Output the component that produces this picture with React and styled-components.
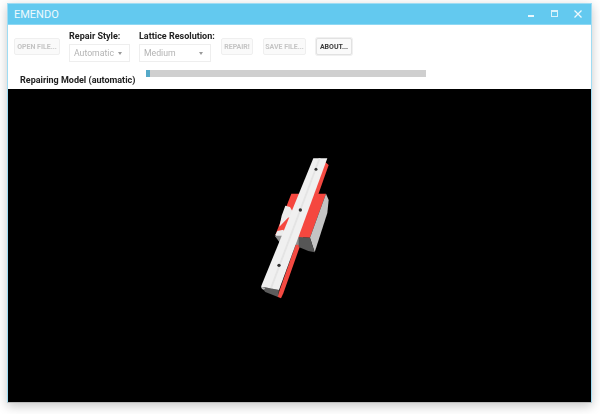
import React from "react";
import styled, { createGlobalStyle } from "styled-components";

const Global = createGlobalStyle`
  html, body { margin: 0; padding: 0; background: #fff; }
  body { width: 600px; height: 414px; overflow: hidden; font-family: Roboto, "Open Sans", sans-serif; }
`;
const Page = styled.div`
  width: 600px; height: 414px; box-sizing: border-box; padding: 3px 8px 12px 7px; display: flex;
`;
const Win = styled.div`
  width: 585px; height: 400px; display: flex; flex-direction: column; background: #fff;
  border: 1px solid #9fdcf3; border-bottom-color: #bbb; box-sizing: border-box;
  box-shadow: 0 3px 10px rgba(0,0,0,.22); filter: blur(.3px);
`;
const TitleBar = styled.div`
  flex: 0 0 20px; background: #63c9ef; display: flex; align-items: center; justify-content: space-between;
  padding: 0 8px 0 6px; color: #eef9fd; font-size: 11px; border-bottom: 1px solid #8fd8f3;
`;
const TitleControls = styled.div`display: flex; align-items: center; gap: 13px;`;
const Toolbar = styled.div`
  display: flex; align-items: flex-start; gap: 10px; padding: 9px 0 0 6px; height: 32px;
`;
const ActionButton = styled.button`
  margin-top: 4px; height: 17px; width: ${p => p.$w}px; padding: 0; box-sizing: border-box; background: #fafafa;
  border: 1px solid ${p => p.$on ? "#e2e2e2" : "#efefef"}; border-radius: 2px;
  color: ${p => p.$on ? "#3a3a3a" : "#c4c4c4"}; font-family: inherit; font-weight: 700; font-size: 7px;
  box-shadow: ${p => p.$on ? "0 0 0 1px #f0f0f0" : "none"};
`;
const Field = styled.div`display: flex; flex-direction: column; width: ${p => p.$w}px; margin-left: -1px; margin-top: -3px;`;
const FieldLabel = styled.div`font-size: 9px; font-weight: 700; color: #222; line-height: 11px; margin-bottom: 2px; white-space: nowrap;`;
const Select = styled.div`
  height: 18px; box-sizing: border-box; border: 1px solid #eee; display: flex; align-items: center;
  justify-content: space-between; padding: 0 7px 0 4px; color: #b3b3b3; font-size: 8.7px;
`;
const Caret = styled.span`width: 0; height: 0; border: 2.5px solid transparent; border-top: 3px solid #999; margin-top: 3px;`;
const ProgressRow = styled.div`display: flex; height: 23px; padding-left: 12px; align-items: flex-start; gap: 11px;`;
const Status = styled.div`font-size: 9px; font-weight: 700; color: #222; margin-top: 8px; line-height: 12px; white-space: nowrap; width: 115px;`;
const Track = styled.div`width: 280px; height: 7px; margin-top: 4px; background: #cfcfcf; display: flex;`;
const Fill = styled.div`width: 4px; background: #55a9c8;`;
const Viewport = styled.div`flex: 1; background: #000; min-height: 0;`;
const Scene = styled.svg`display: block; width: 100%; height: 100%;`;

const Model = () => (
  <Scene viewBox="8 89 583 313">
    <g transform="translate(240 145) scale(.33333)">
      <polygon points="255,50 266,60 130,445 123,460 112,455" fill="#f44a42" />
      <polygon points="154,146 258,146 210,278 122,275 106,270" fill="#f5473f" />
      <polygon points="136,182 150,186 165,212 144,218 118,245 125,212" fill="#ececec" />
      <polygon points="106,270 112,258 130,254 138,272 122,296" fill="#ececec" />
      <polygon points="258,146 266,165 262,204 224,322 210,278" fill="#c4c4c4" />
      <polygon points="104,272 175,272 180,300 122,296" fill="#8d8d8d" />
      <polygon points="176,276 210,278 224,322 205,318 176,306" fill="#565656" />
      <polygon points="63,425 117,435 114,456 76,441" fill="#5c5c5c" />
      <polygon points="220,40 262,40 117,435 63,425" fill="#f0f0f0" />
      <polygon points="236,40 242,40 96,430 90,429" fill="#e4e4e4" />
      <polygon points="63,425 76,429 72,434 66,432" fill="#bdbdbd" />
      <circle cx="228" cy="73" r="4.5" fill="#333" />
      <circle cx="181" cy="195" r="5" fill="#333" />
      <circle cx="117" cy="361" r="5" fill="#333" />
    </g>
  </Scene>
);

export default function App() {
  return (
    <Page>
      <Global />
      <Win>
        <TitleBar>
          <span>EMENDO</span>
          <TitleControls>
            <svg width="10" height="10" viewBox="0 0 10 10"><rect x="1" y="6" width="6" height="2" fill="#e8f7fd" /></svg>
            <svg width="10" height="10" viewBox="0 0 10 10"><rect x="1.5" y="1.5" width="6" height="6" fill="none" stroke="#d8f2fb" /><rect x="1" y="1" width="7" height="2" fill="#d8f2fb" /></svg>
            <svg width="10" height="10" viewBox="0 0 10 10"><path d="M1.5 1.5l7 7M8.5 1.5l-7 7" stroke="#eef9fd" strokeWidth="1.3" /></svg>
          </TitleControls>
        </TitleBar>
        <Toolbar>
          <ActionButton $w={46}>OPEN FILE...</ActionButton>
          <Field $w={61}>
            <FieldLabel>Repair Style:</FieldLabel>
            <Select>Automatic<Caret /></Select>
          </Field>
          <Field $w={72}>
            <FieldLabel>Lattice Resolution:</FieldLabel>
            <Select>Medium<Caret /></Select>
          </Field>
          <ActionButton $w={32}>REPAIR!</ActionButton>
          <ActionButton $w={43}>SAVE FILE...</ActionButton>
          <ActionButton $w={36} $on>ABOUT...</ActionButton>
        </Toolbar>
        <ProgressRow>
          <Status>Repairing Model (automatic)</Status>
          <Track><Fill /></Track>
        </ProgressRow>
        <Viewport><Model /></Viewport>
      </Win>
    </Page>
  );
}
